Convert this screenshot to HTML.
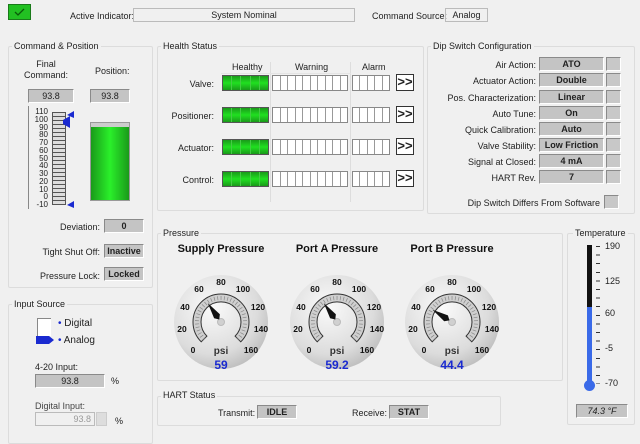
<!DOCTYPE html>
<html><head><meta charset="utf-8"><style>
*{margin:0;padding:0;box-sizing:border-box}
body{width:640px;height:434px;background:#f0f0f0;font-family:"Liberation Sans",sans-serif;font-size:9px;color:#222;position:relative;overflow:hidden}
.a{position:absolute}
.g{position:absolute;border:1px solid #dcdcdc;border-radius:2px}
.t{position:absolute;background:#f0f0f0;padding:0 2px;font-size:9px;color:#222}
.f{position:absolute;background:#c4c4c4;border:1px solid #8a8a8a;border-right-color:#fff;border-bottom-color:#fff;text-align:center;font-size:9px;line-height:12px;font-weight:bold;color:#222}
.l{position:absolute;text-align:right;font-size:9px}
.hb{position:absolute;height:16px;border:1px solid #555;background:linear-gradient(#1a9a1a,#20e020 50%,#1a9a1a);display:flex}
.hb i{flex:1;border-right:1px solid #4c4;}
.wb{position:absolute;height:16px;border:1px solid #888;background:#fff;display:flex}
.wb i{flex:1;border-right:1px solid #999}
.btn{position:absolute;width:18px;height:17px;border:1px solid #333;background:#fff;font-size:13px;font-weight:bold;text-align:center;line-height:14px}
.sb{position:absolute;width:15px;height:14px;background:#c8c8c8;border:1px solid #8a8a8a;border-right-color:#fff;border-bottom-color:#fff}
.tl{position:absolute;left:605px;font-size:9px}
</style></head><body>
<!-- top -->
<div class="a" style="left:8px;top:4px;width:23px;height:16px;background:#22c022;border:1px solid #1a7a1a"><svg width="21" height="14"><path d="M6 7l3 3 6-6" stroke="#0a5a0a" stroke-width="1.3" fill="none"/></svg></div>
<div class="a" style="left:70px;top:11px">Active Indicator:</div>
<div class="a" style="left:133px;top:8px;width:222px;height:14px;border:1px solid #bbb;background:#f0f0f0;text-align:center;line-height:12px">System Nominal</div>
<div class="a" style="left:372px;top:11px">Command Source:</div>
<div class="a" style="left:445px;top:8px;width:43px;height:14px;border:1px solid #bbb;text-align:center;line-height:12px">Analog</div>

<!-- Command & Position -->
<div class="g" style="left:8px;top:46px;width:145px;height:242px"></div>
<div class="t" style="left:12px;top:41px">Command &amp; Position</div>
<div class="a" style="left:22px;top:59px;width:48px;text-align:center;line-height:11px">Final<br>Command:</div>
<div class="a" style="left:95px;top:66px">Position:</div>
<div class="f" style="left:28px;top:89px;width:46px;height:14px;font-weight:normal">93.8</div>
<div class="f" style="left:90px;top:89px;width:40px;height:14px;font-weight:normal">93.8</div>
<div class="a" style="left:28px;top:106px;width:48px;height:103px;border-left:1px solid #888;background:#f0f0f0"></div>
<div class="a" style="left:30px;top:108px;width:18px;font-size:8px;line-height:7.75px;text-align:right">110<br>100<br>90<br>80<br>70<br>60<br>50<br>40<br>30<br>20<br>10<br>0<br>-10</div>
<div class="a" style="left:52px;top:112px;width:14px;height:93px;border:1px solid #555;background:repeating-linear-gradient(#ddd 0 3px,#555 3px 4px)"></div>
<svg class="a" style="left:56px;top:106px" width="24" height="104"><polygon points="18,5 18,12 11,9" fill="#1a2ad0"/><polygon points="7,14 14,10 14,22 7,18" fill="#1a2ad0"/><polygon points="18,95 18,102 11,99" fill="#1a2ad0"/></svg>
<div class="a" style="left:90px;top:122px;width:40px;height:79px;background:#ccc;border:1px solid #999"><div style="position:absolute;left:0;right:0;bottom:0;height:73px;background:linear-gradient(90deg,#1a9a1a,#2af02a 50%,#1a9a1a)"></div></div>
<div class="l" style="left:20px;top:222px;width:80px">Deviation:</div>
<div class="f" style="left:104px;top:219px;width:40px;height:14px">0</div>
<div class="l" style="left:20px;top:247px;width:80px">Tight Shut Off:</div>
<div class="f" style="left:104px;top:244px;width:40px;height:14px">Inactive</div>
<div class="l" style="left:20px;top:271px;width:80px">Pressure Lock:</div>
<div class="f" style="left:104px;top:267px;width:40px;height:14px">Locked</div>

<!-- Input Source -->
<div class="g" style="left:8px;top:304px;width:145px;height:140px"></div>
<div class="t" style="left:12px;top:299px">Input Source</div>
<div class="a" style="left:37px;top:318px;width:14px;height:18px;background:#fff;border-left:1px solid #888;border-top:1px solid #888"></div>
<svg class="a" style="left:36px;top:335px" width="20" height="10"><polygon points="0,1 13,1 18,5 13,9 0,9" fill="#1a2ad0"/></svg>
<div class="a" style="left:58px;top:318px;font-size:10px"><span style="color:#1a2ad0">•</span> Digital</div>
<div class="a" style="left:58px;top:335px;font-size:10px"><span style="color:#1a2ad0">•</span> Analog</div>
<div class="a" style="left:35px;top:362px">4-20 Input:</div>
<div class="f" style="left:35px;top:374px;width:70px;height:14px;font-weight:normal">93.8</div>
<div class="a" style="left:111px;top:376px">%</div>
<div class="a" style="left:35px;top:401px;color:#444">Digital Input:</div>
<div class="a" style="left:35px;top:412px;width:60px;height:14px;border:1px solid #bbb;text-align:right;color:#999;padding-right:3px;line-height:12px">93.8</div>
<div class="a" style="left:96px;top:412px;width:11px;height:14px;background:#ddd;border:1px solid #ccc"></div>
<div class="a" style="left:115px;top:416px">%</div>

<!-- Health -->
<div class="g" style="left:157px;top:46px;width:267px;height:165px"></div>
<div class="t" style="left:161px;top:41px">Health Status</div>
<div class="a" style="left:232px;top:62px">Healthy</div>
<div class="a" style="left:295px;top:62px">Warning</div>
<div class="a" style="left:362px;top:62px">Alarm</div>
<div class="a" style="left:270px;top:62px;width:1px;height:140px;background:#ddd"></div>
<div class="a" style="left:350px;top:62px;width:1px;height:140px;background:#ddd"></div>
<div class="a" style="left:221px;top:73px;width:130px;height:1px;background:#e4e4e4"></div>

<div class="l" style="left:150px;top:79px;width:64px">Valve:</div>
<div class="hb" style="left:222px;top:75px;width:47px"><i></i><i></i><i></i><i></i><i style="border:0"></i></div>
<div class="wb" style="left:272px;top:75px;width:76px"><i></i><i></i><i></i><i></i><i></i><i></i><i></i><i></i><i></i><i style="border:0"></i></div>
<div class="wb" style="left:352px;top:75px;width:38px"><i></i><i></i><i></i><i></i><i style="border:0"></i></div>
<div class="btn" style="left:396px;top:74px">&gt;&gt;</div>

<div class="l" style="left:150px;top:111px;width:64px">Positioner:</div>
<div class="hb" style="left:222px;top:107px;width:47px"><i></i><i></i><i></i><i></i><i style="border:0"></i></div>
<div class="wb" style="left:272px;top:107px;width:76px"><i></i><i></i><i></i><i></i><i></i><i></i><i></i><i></i><i></i><i style="border:0"></i></div>
<div class="wb" style="left:352px;top:107px;width:38px"><i></i><i></i><i></i><i></i><i style="border:0"></i></div>
<div class="btn" style="left:396px;top:106px">&gt;&gt;</div>

<div class="l" style="left:150px;top:143px;width:64px">Actuator:</div>
<div class="hb" style="left:222px;top:139px;width:47px"><i></i><i></i><i></i><i></i><i style="border:0"></i></div>
<div class="wb" style="left:272px;top:139px;width:76px"><i></i><i></i><i></i><i></i><i></i><i></i><i></i><i></i><i></i><i style="border:0"></i></div>
<div class="wb" style="left:352px;top:139px;width:38px"><i></i><i></i><i></i><i></i><i style="border:0"></i></div>
<div class="btn" style="left:396px;top:138px">&gt;&gt;</div>

<div class="l" style="left:150px;top:175px;width:64px">Control:</div>
<div class="hb" style="left:222px;top:171px;width:47px"><i></i><i></i><i></i><i></i><i style="border:0"></i></div>
<div class="wb" style="left:272px;top:171px;width:76px"><i></i><i></i><i></i><i></i><i></i><i></i><i></i><i></i><i></i><i style="border:0"></i></div>
<div class="wb" style="left:352px;top:171px;width:38px"><i></i><i></i><i></i><i></i><i style="border:0"></i></div>
<div class="btn" style="left:396px;top:170px">&gt;&gt;</div>

<!-- Dip -->
<div class="g" style="left:427px;top:46px;width:208px;height:168px"></div>
<div class="t" style="left:431px;top:41px">Dip Switch Configuration</div>
<div class="l" style="left:430px;top:60px;width:106px">Air Action:</div><div class="f" style="left:539px;top:57px;width:65px;height:14px">ATO</div><div class="sb" style="left:606px;top:57px"></div>
<div class="l" style="left:430px;top:76px;width:106px">Actuator Action:</div><div class="f" style="left:539px;top:73px;width:65px;height:14px">Double</div><div class="sb" style="left:606px;top:73px"></div>
<div class="l" style="left:430px;top:93px;width:106px">Pos. Characterization:</div><div class="f" style="left:539px;top:90px;width:65px;height:14px">Linear</div><div class="sb" style="left:606px;top:90px"></div>
<div class="l" style="left:430px;top:109px;width:106px">Auto Tune:</div><div class="f" style="left:539px;top:106px;width:65px;height:14px">On</div><div class="sb" style="left:606px;top:106px"></div>
<div class="l" style="left:430px;top:125px;width:106px">Quick Calibration:</div><div class="f" style="left:539px;top:122px;width:65px;height:14px">Auto</div><div class="sb" style="left:606px;top:122px"></div>
<div class="l" style="left:430px;top:141px;width:106px">Valve Stability:</div><div class="f" style="left:539px;top:138px;width:65px;height:14px">Low Friction</div><div class="sb" style="left:606px;top:138px"></div>
<div class="l" style="left:430px;top:157px;width:106px">Signal at Closed:</div><div class="f" style="left:539px;top:154px;width:65px;height:14px">4 mA</div><div class="sb" style="left:606px;top:154px"></div>
<div class="l" style="left:430px;top:173px;width:106px">HART Rev.</div><div class="f" style="left:539px;top:170px;width:65px;height:14px">7</div><div class="sb" style="left:606px;top:170px"></div>
<div class="l" style="left:430px;top:198px;width:170px">Dip Switch Differs From Software</div><div class="sb" style="left:604px;top:195px"></div>

<!-- Pressure -->
<div class="g" style="left:157px;top:233px;width:406px;height:148px"></div>
<div class="t" style="left:161px;top:228px">Pressure</div>
<svg class="a" style="left:157px;top:238px" width="406" height="140" font-family="Liberation Sans" font-weight="bold">
<defs>
<radialGradient id="rg" cx="0.4" cy="0.35" r="0.7"><stop offset="0" stop-color="#fafafa"/><stop offset="0.7" stop-color="#dcdcdc"/><stop offset="1" stop-color="#bcbcbc"/></radialGradient>
<g id="gauge">
<circle r="47" fill="url(#rg)"/>
<path d="M-19.8,19.8 A28,28 0 1 1 19.8,19.8 L14.1,14.1 A20,20 0 1 0 -14.1,14.1 Z" fill="#cfcfcf" stroke="#333" stroke-width="1"/>
<path d="M-17,17 A24,24 0 1 1 17,17" fill="none" stroke="#888" stroke-width="4" stroke-dasharray="0.7 2.6"/>
<circle r="3.5" fill="#d0d0d0" stroke="#bbb"/>
<g font-size="8.5" text-anchor="middle" fill="#111">
<text x="-28" y="31">0</text><text x="-39" y="10">20</text><text x="-36" y="-12">40</text><text x="-22" y="-30">60</text><text x="0" y="-37">80</text><text x="22" y="-30">100</text><text x="37" y="-12">120</text><text x="40" y="10">140</text><text x="30" y="31">160</text>
<text x="0" y="32" font-size="10" fill="#333">psi</text>
</g>
</g>
<polygon id="nd" points="0,-23 3.5,-7 0,-3 -3.5,-7" fill="#111"/>
</defs>
<g font-size="11" text-anchor="middle" fill="#111"><text x="64" y="14">Supply Pressure</text><text x="180" y="14">Port A Pressure</text><text x="295" y="14">Port B Pressure</text></g>
<g transform="translate(64,84)"><use href="#gauge"/><use href="#nd" transform="rotate(-35)"/><text x="0" y="47" font-size="12" text-anchor="middle" fill="#1a2ad0">59</text></g>
<g transform="translate(180,84)"><use href="#gauge"/><use href="#nd" transform="rotate(-35)"/><text x="0" y="47" font-size="12" text-anchor="middle" fill="#1a2ad0">59.2</text></g>
<g transform="translate(295,84)"><use href="#gauge"/><use href="#nd" transform="rotate(-58)"/><text x="0" y="47" font-size="12" text-anchor="middle" fill="#1a2ad0">44.4</text></g>
</svg>

<!-- HART -->
<div class="g" style="left:157px;top:396px;width:344px;height:30px"></div>
<div class="t" style="left:161px;top:390px">HART Status</div>
<div class="a" style="left:218px;top:408px">Transmit:</div>
<div class="f" style="left:257px;top:405px;width:40px;height:14px">IDLE</div>
<div class="a" style="left:352px;top:408px">Receive:</div>
<div class="f" style="left:389px;top:405px;width:40px;height:14px">STAT</div>

<!-- Temperature -->
<div class="g" style="left:567px;top:233px;width:68px;height:192px"></div>
<div class="t" style="left:573px;top:228px">Temperature</div>
<div class="a" style="left:587px;top:245px;width:5px;height:62px;background:#111"></div>
<div class="a" style="left:587px;top:307px;width:5px;height:76px;background:#3a6ae8"></div>
<div class="a" style="left:584px;top:380px;width:11px;height:11px;border-radius:50%;background:#3a6ae8"></div>
<div class="a" style="left:596px;top:246px;width:4px;height:138px;background:repeating-linear-gradient(#333 0 1px,transparent 1px 8.6px)"></div>
<div class="tl" style="top:241px">190</div>
<div class="tl" style="top:276px">125</div>
<div class="tl" style="top:308px">60</div>
<div class="tl" style="top:343px">-5</div>
<div class="tl" style="top:378px">-70</div>
<div class="f" style="left:576px;top:404px;width:52px;height:14px;font-weight:normal;font-style:italic">74.3 °F</div>
</body></html>
